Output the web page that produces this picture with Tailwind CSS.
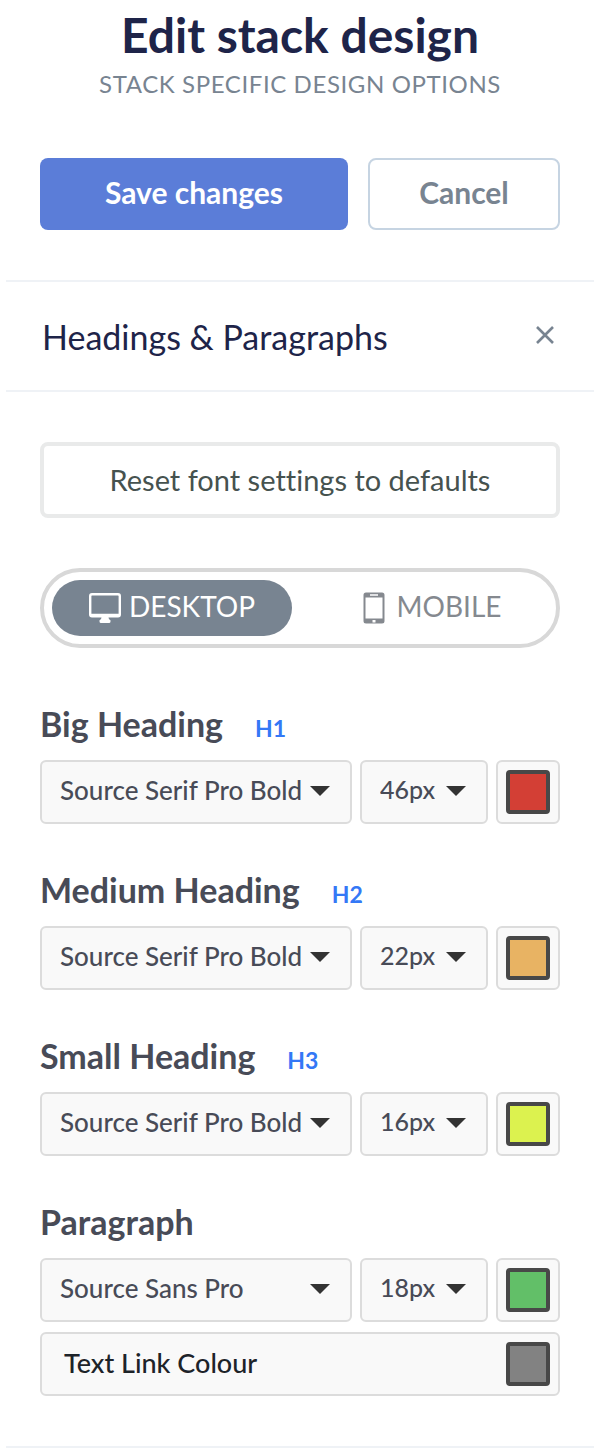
<!DOCTYPE html>
<html lang="en">
<head>
  <meta charset="utf-8">
  <meta name="viewport" content="width=device-width, initial-scale=1">
  <title>Edit stack design</title>
  <script src="https://cdn.jsdelivr.net/npm/@tailwindcss/browser@4"></script>
</head>
<body class="bg-white font-['Lato',sans-serif] text-[#484b57] [font-variant-ligatures:none]">
  <main class="pl-1.5">

    <!-- Title and actions -->
    <header class="px-[34px] pt-1.5 pb-[50px]">
      <h1 class="text-center text-[48px] leading-[58px] font-bold text-[#1e2449]">Edit stack design</h1>
      <p class="text-center text-2xl leading-10 text-[#788491] tracking-wide uppercase">Stack specific design options</p>
      <div class="mt-[54px] flex gap-5">
        <button type="button" class="h-18 flex-1 rounded-lg bg-[#5b7dd8] pb-1 text-[30px] font-bold text-white">Save changes</button>
        <button type="button" class="h-18 w-48 rounded-lg border-2 border-[#c6d4e2] pb-1 text-[30px] font-bold text-[#788491]">Cancel</button>
      </div>
    </header>

    <!-- Section bar -->
    <div class="flex h-28 items-center justify-between border-y-2 border-[#eff2f6] pr-10 pl-9">
      <h2 class="text-[34px] text-[#1e2449]">Headings &amp; Paragraphs</h2>
      <button type="button" aria-label="Close section" class="pb-0.5">
        <svg class="size-[18px]" viewBox="0 0 18 18" fill="none" stroke="#788491" stroke-width="2.6"><path d="M1 1l16 16M17 1L1 17"/></svg>
      </button>
    </div>

    <section class="border-b-2 border-[#eff2f6] px-[34px] py-[50px]">
      <button type="button" class="h-19 w-full rounded-lg border-4 border-[#e9eaea] text-[29px] text-[#46524f]">Reset font settings to defaults</button>

      <!-- Device switch -->
      <div class="mt-[50px] grid h-20 grid-cols-2 gap-4 rounded-full border-4 border-[#d8d8d8] p-2 text-[28px] text-[#85898f]">
        <label class="flex items-center justify-center gap-2 rounded-full pb-1 has-checked:bg-[#788491] has-checked:text-white">
          <input type="radio" name="device" class="sr-only" checked>
          <svg class="mt-1 h-[30px] w-8" viewBox="0 0 32 30" fill="none"><rect x="1.2" y="1.2" width="29.6" height="22" rx="1.8" stroke="currentColor" stroke-width="2.4"/><path d="M2 20.8h28v2.4H2zM12.500 24h7c0 2 .8 2.600 2 3.200v1.300q0 1.500-1.500 1.500h-8q-1.500 0-1.500-1.500v-1.300c1.200-.6 2-1.200 2-3.200z" fill="currentColor"/></svg>
          DESKTOP
        </label>
        <label class="flex items-center justify-center gap-3 rounded-full pb-1 pl-2 has-checked:bg-[#788491] has-checked:text-white">
          <input type="radio" name="device" class="sr-only">
          <svg class="mt-1 h-8 w-[22px]" viewBox="0 0 22 32"><path fill="currentColor" fill-rule="evenodd" d="M3 .5h16q2.500 0 2.500 2.500v26q0 2.500-2.500 2.500H3Q.5 31.500.5 29V3Q.5.500 3 .5zM2.500 5.500v21h17v-21zM7 2.200v1.600h8V2.200zM9.500 28v2.500h3V28z"/></svg>
          MOBILE
        </label>
      </div>

      <!-- Font rows -->
      <div class="mt-[52px] flex flex-col gap-[42px]">
        <div>
          <div class="flex items-baseline gap-8">
            <h3 class="text-[34px] leading-12 font-bold">Big Heading</h3>
            <span class="text-[23px] font-bold text-[#3478f6]">H1</span>
          </div>
          <div class="mt-3 flex gap-2">
            <div class="relative flex-1">
              <select aria-label="Big heading font" class="h-16 w-full appearance-none rounded-md border-2 border-[#dcdcdc] bg-[#f9f9f9] pb-1 pl-[18px] text-[26px] font-medium"><option>Source Serif Pro Bold</option></select>
              <svg class="pointer-events-none absolute top-[26px] right-[22px] h-2.5 w-5" viewBox="0 0 20 10"><path fill="#333" d="M0 0h20L10 10z"/></svg>
            </div>
            <div class="relative w-32">
              <select aria-label="Big heading size" class="h-16 w-full appearance-none rounded-md border-2 border-[#dcdcdc] bg-[#f9f9f9] pb-1 pl-[18px] text-[25px] font-medium"><option>46px</option></select>
              <svg class="pointer-events-none absolute top-[26px] right-[22px] h-2.5 w-5" viewBox="0 0 20 10"><path fill="#333" d="M0 0h20L10 10z"/></svg>
            </div>
            <div class="flex size-16 items-center justify-center rounded-md border-2 border-[#dcdcdc] bg-[#f9f9f9]">
              <input type="color" aria-label="Big heading colour" value="#d33f35" class="size-11 rounded border-4 border-[#484848] [&::-webkit-color-swatch]:rounded-none [&::-webkit-color-swatch]:border-0 [&::-webkit-color-swatch-wrapper]:p-0">
            </div>
          </div>
        </div>

        <div>
          <div class="flex items-baseline gap-8">
            <h3 class="text-[34px] leading-12 font-bold">Medium Heading</h3>
            <span class="text-[23px] font-bold text-[#3478f6]">H2</span>
          </div>
          <div class="mt-3 flex gap-2">
            <div class="relative flex-1">
              <select aria-label="Medium heading font" class="h-16 w-full appearance-none rounded-md border-2 border-[#dcdcdc] bg-[#f9f9f9] pb-1 pl-[18px] text-[26px] font-medium"><option>Source Serif Pro Bold</option></select>
              <svg class="pointer-events-none absolute top-[26px] right-[22px] h-2.5 w-5" viewBox="0 0 20 10"><path fill="#333" d="M0 0h20L10 10z"/></svg>
            </div>
            <div class="relative w-32">
              <select aria-label="Medium heading size" class="h-16 w-full appearance-none rounded-md border-2 border-[#dcdcdc] bg-[#f9f9f9] pb-1 pl-[18px] text-[25px] font-medium"><option>22px</option></select>
              <svg class="pointer-events-none absolute top-[26px] right-[22px] h-2.5 w-5" viewBox="0 0 20 10"><path fill="#333" d="M0 0h20L10 10z"/></svg>
            </div>
            <div class="flex size-16 items-center justify-center rounded-md border-2 border-[#dcdcdc] bg-[#f9f9f9]">
              <input type="color" aria-label="Medium heading colour" value="#e8b363" class="size-11 rounded border-4 border-[#484848] [&::-webkit-color-swatch]:rounded-none [&::-webkit-color-swatch]:border-0 [&::-webkit-color-swatch-wrapper]:p-0">
            </div>
          </div>
        </div>

        <div>
          <div class="flex items-baseline gap-8">
            <h3 class="text-[34px] leading-12 font-bold">Small Heading</h3>
            <span class="text-[23px] font-bold text-[#3478f6]">H3</span>
          </div>
          <div class="mt-3 flex gap-2">
            <div class="relative flex-1">
              <select aria-label="Small heading font" class="h-16 w-full appearance-none rounded-md border-2 border-[#dcdcdc] bg-[#f9f9f9] pb-1 pl-[18px] text-[26px] font-medium"><option>Source Serif Pro Bold</option></select>
              <svg class="pointer-events-none absolute top-[26px] right-[22px] h-2.5 w-5" viewBox="0 0 20 10"><path fill="#333" d="M0 0h20L10 10z"/></svg>
            </div>
            <div class="relative w-32">
              <select aria-label="Small heading size" class="h-16 w-full appearance-none rounded-md border-2 border-[#dcdcdc] bg-[#f9f9f9] pb-1 pl-[18px] text-[25px] font-medium"><option>16px</option></select>
              <svg class="pointer-events-none absolute top-[26px] right-[22px] h-2.5 w-5" viewBox="0 0 20 10"><path fill="#333" d="M0 0h20L10 10z"/></svg>
            </div>
            <div class="flex size-16 items-center justify-center rounded-md border-2 border-[#dcdcdc] bg-[#f9f9f9]">
              <input type="color" aria-label="Small heading colour" value="#dcf24f" class="size-11 rounded border-4 border-[#484848] [&::-webkit-color-swatch]:rounded-none [&::-webkit-color-swatch]:border-0 [&::-webkit-color-swatch-wrapper]:p-0">
            </div>
          </div>
        </div>

        <div>
          <h3 class="text-[34px] leading-12 font-bold">Paragraph</h3>
          <div class="mt-3 flex gap-2">
            <div class="relative flex-1">
              <select aria-label="Paragraph font" class="h-16 w-full appearance-none rounded-md border-2 border-[#dcdcdc] bg-[#f9f9f9] pb-1 pl-[18px] text-[26px] font-medium"><option>Source Sans Pro</option></select>
              <svg class="pointer-events-none absolute top-[26px] right-[22px] h-2.5 w-5" viewBox="0 0 20 10"><path fill="#333" d="M0 0h20L10 10z"/></svg>
            </div>
            <div class="relative w-32">
              <select aria-label="Paragraph size" class="h-16 w-full appearance-none rounded-md border-2 border-[#dcdcdc] bg-[#f9f9f9] pb-1 pl-[18px] text-[25px] font-medium"><option>18px</option></select>
              <svg class="pointer-events-none absolute top-[26px] right-[22px] h-2.5 w-5" viewBox="0 0 20 10"><path fill="#333" d="M0 0h20L10 10z"/></svg>
            </div>
            <div class="flex size-16 items-center justify-center rounded-md border-2 border-[#dcdcdc] bg-[#f9f9f9]">
              <input type="color" aria-label="Paragraph colour" value="#62bf68" class="size-11 rounded border-4 border-[#484848] [&::-webkit-color-swatch]:rounded-none [&::-webkit-color-swatch]:border-0 [&::-webkit-color-swatch-wrapper]:p-0">
            </div>
          </div>
          <div class="mt-2.5 flex h-16 items-center justify-between rounded-md border-2 border-[#dcdcdc] bg-[#f9f9f9] pr-2 pl-[22px]">
            <label for="link-colour" class="pb-0.5 text-[27px] font-medium text-[#1d2329]">Text Link Colour</label>
            <input id="link-colour" type="color" value="#828282" class="size-11 rounded border-4 border-[#484848] [&::-webkit-color-swatch]:rounded-none [&::-webkit-color-swatch]:border-0 [&::-webkit-color-swatch-wrapper]:p-0">
          </div>
        </div>
      </div>
    </section>
  </main>
</body>
</html>
